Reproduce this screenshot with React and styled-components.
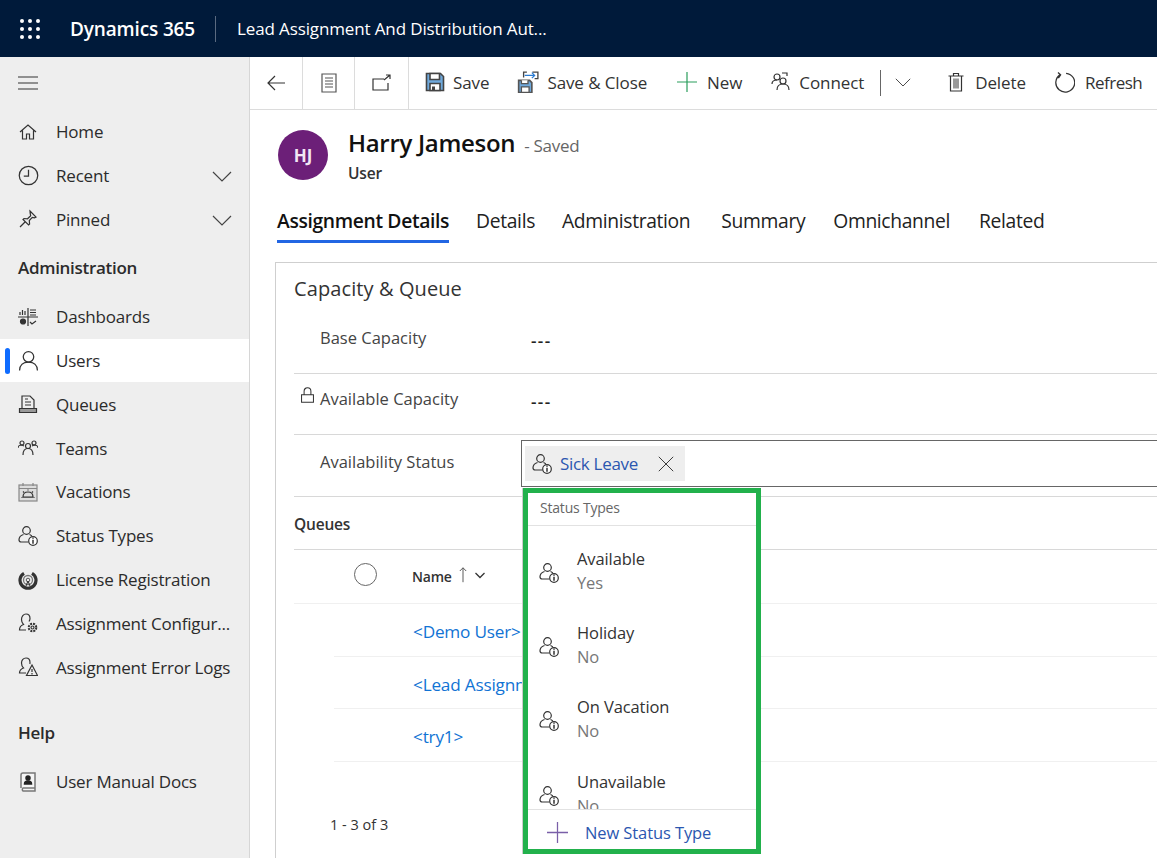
import React from 'react';
import styled, { createGlobalStyle } from 'styled-components';

const Global = createGlobalStyle`
	html, body { margin: 0; padding: 0; background: #fff; }
	body { font-family: "Open Sans", "Noto Sans", sans-serif; overflow: hidden; }
	* { box-sizing: border-box; }
`;

const Page = styled.div`
	width: 1157px;
	height: 858px;
	overflow: hidden;
	display: flex;
	flex-direction: column;
	letter-spacing: -0.2px;
`;

const TopBar = styled.header`
	height: 57px;
	flex: none;
	background: #001a3a;
	color: #fff;
	display: flex;
	align-items: center;
	padding-left: 20px;
`;

const Brand = styled.span`
	font-size: 19px;
	font-weight: 600;
	margin-left: 30px;
	padding-right: 20px;
	letter-spacing: -0.15px;
`;

const AppName = styled.span`
	font-size: 17px;
	border-left: 1px solid #5a6a80;
	padding-left: 21px;
	line-height: 26px;
	letter-spacing: -0.13px;
`;

const Body = styled.div`
	flex: 1;
	display: flex;
	min-height: 0;
`;

const Sidebar = styled.nav`
	width: 250px;
	flex: none;
	background: #eeeeee;
	border-right: 1px solid #d6d6d6;
	padding-top: 6px;
`;

const Burger = styled.div`
	height: 40px;
	margin-bottom: 7px;
	padding-left: 18px;
	display: flex;
	align-items: center;
`;

const NavRow = styled.div`
	position: relative;
	height: 43.8px;
	display: flex;
	align-items: center;
	padding-left: 18px;
	font-size: 17px;
	color: #2b2b2b;
	background: ${(p) => (p.$active ? '#fff' : 'transparent')};
	&:before {
		content: '';
		display: ${(p) => (p.$active ? 'block' : 'none')};
		position: absolute;
		left: 5px;
		top: 9px;
		width: 5px;
		height: 26px;
		border-radius: 3px;
		background: #0f6cff;
	}
`;

const NavIcon = styled.span`
	width: 38px;
	flex: none;
	display: flex;
`;

const NavChevron = styled.span`
	position: absolute;
	right: 17px;
	top: 12px;
	display: flex;
`;

const NavHeading = styled.div`
	font-size: 17px;
	font-weight: 600;
	color: #2b2b2b;
	padding-left: 18px;
	height: ${(p) => p.$height}px;
	padding-top: ${(p) => p.$top}px;
	line-height: 24px;
	letter-spacing: -0.3px;
`;

const Main = styled.main`
	flex: 1;
	min-width: 0;
	position: relative;
	display: flex;
	flex-direction: column;
`;

const Toolbar = styled.div`
	height: 53px;
	flex: none;
	border-bottom: 1px solid #dcdcdc;
	display: flex;
	align-items: stretch;
	white-space: nowrap;
`;

const NavButton = styled.div`
	width: ${(p) => p.$w}px;
	flex: none;
	display: flex;
	align-items: center;
	justify-content: center;
	border-right: 1px solid #dcdcdc;
`;

const ToolButton = styled.div`
	display: flex;
	align-items: center;
	gap: ${(p) => p.$gap || 8}px;
	margin-left: ${(p) => p.$ml || 0}px;
	padding-bottom: 2px;
	font-size: 17px;
	color: #333;
	letter-spacing: ${(p) => p.$ls || -0.1}px;
`;

const Rule = styled.span`
	width: 1px;
	height: 26px;
	background: #666;
	align-self: center;
	margin-left: 16px;
`;

const Head = styled.div`
	display: flex;
	align-items: flex-start;
	padding: 20px 0 0 28px;
	height: 89px;
	flex: none;
`;

const Avatar = styled.div`
	width: 50px;
	height: 50px;
	border-radius: 50%;
	background: #6c1f78;
	color: #f2e6f4;
	font-size: 17px;
	font-weight: 700;
	display: flex;
	align-items: center;
	justify-content: center;
	letter-spacing: 0;
`;

const Titles = styled.div`
	margin-left: 20px;
	margin-top: -4px;
`;

const Name = styled.div`
	font-size: 24px;
	font-weight: 600;
	color: #111;
	line-height: 34px;
	display: flex;
	align-items: baseline;
	gap: 9px;
	letter-spacing: -0.3px;
`;

const Saved = styled.span`
	font-size: 17px;
	font-weight: 400;
	color: #666;
	letter-spacing: -0.3px;
`;

const Entity = styled.div`
	font-size: 15.5px;
	font-weight: 600;
	color: #333;
	line-height: 22px;
	margin-top: -1px;
`;

const Tabs = styled.div`
	display: flex;
	padding-left: 27px;
	height: 43px;
	flex: none;
`;

const Tab = styled.div`
	font-size: 19.3px;
	line-height: 44px;
	height: 44px;
	font-weight: ${(p) => (p.$active ? 600 : 400)};
	color: ${(p) => (p.$active ? '#111' : '#222')};
	margin-right: ${(p) => p.$mr}px;
	border-bottom: ${(p) => (p.$active ? '3px solid #2266e3' : 'none')};
	letter-spacing: -0.35px;
	white-space: nowrap;
`;

const Section = styled.section`
	margin: 20px 0 0 25px;
	flex: 1;
	border: solid #cfcfcf;
	border-width: 1px 0 0 1px;
	padding: 0 0 0 18px;
	min-height: 0;
`;

const SectionTitle = styled.h2`
	margin: 0;
	font-size: 20px;
	font-weight: 400;
	color: #333;
	line-height: 26px;
	padding-top: 13px;
	height: 50px;
	letter-spacing: 0.1px;
`;

const Field = styled.div`
	height: ${(p) => p.$h}px;
	display: flex;
	border-bottom: 1px solid #d8d8d8;
	position: relative;
`;

const FieldLabel = styled.div`
	width: 227px;
	flex: none;
	padding: 0 0 0 26px;
	font-size: 16.5px;
	color: #444;
	line-height: 24px;
	padding-top: ${(p) => p.$top}px;
	letter-spacing: 0;
`;

const LockIcon = styled.span`
	position: absolute;
	left: 5px;
	top: 13px;
	display: flex;
`;

const FieldValue = styled.div`
	font-size: 17px;
	font-weight: 600;
	color: #222;
	padding: ${(p) => p.$top}px 0 0 10px;
	line-height: 24px;
	letter-spacing: 1.4px;
`;

const Lookup = styled.div`
	flex: 1;
	height: 47px;
	margin-top: 5px;
	border: 1px solid #666;
	border-right: 0;
	padding: 5px 3px;
`;

const Chip = styled.div`
	width: 160px;
	height: 35px;
	background: #eeeeee;
	display: flex;
	align-items: center;
	padding-left: 7px;
	color: #2b57b0;
	font-size: 17px;
	gap: 8px;
	letter-spacing: -0.3px;
`;

const ChipClose = styled.span`
	margin-left: 12px;
	display: flex;
`;

const SubHeading = styled.div`
	height: 53px;
	border-bottom: 1px solid #d8d8d8;
	font-size: 15.5px;
	font-weight: 600;
	color: #333;
	line-height: 54px;
`;

const GridHead = styled.div`
	height: 54px;
	border-bottom: 1px solid #f0f0f0;
	display: flex;
	align-items: center;
	padding-left: 60px;
	font-size: 14px;
	font-weight: 600;
	color: #333;
`;

const Radio = styled.span`
	width: 23px;
	height: 23px;
	border: 1.5px solid #666;
	border-radius: 50%;
	margin-right: 35px;
	margin-top: -4px;
`;

const SortIcons = styled.span`
	display: flex;
	align-items: center;
	gap: 4px;
	margin-left: 3px;
	margin-top: -4px;
`;

const GridRow = styled.div`
	height: ${(p) => p.$h}px;
	margin-left: 40px;
	padding-left: 79px;
	border-bottom: 1px solid #f0f0f0;
	font-size: 17.2px;
	line-height: 55px;
	color: #1173d4;
	white-space: nowrap;
`;

const Count = styled.div`
	margin: 53px 0 0 36px;
	font-size: 14.5px;
	color: #333;
	letter-spacing: 0;
`;

const Flyout = styled.div`
	position: absolute;
	left: 273px;
	top: 431px;
	width: 238px;
	height: 366px;
	background: #fff;
	border: 5px solid #22b14c;
	display: flex;
	flex-direction: column;
	box-shadow: -1px 0 0 #ccc;
`;

const FlyoutHead = styled.div`
	height: 33px;
	flex: none;
	border-bottom: 1px solid #e2e2e2;
	padding-left: 12px;
	font-size: 14px;
	color: #666;
	line-height: 30px;
`;

const FlyoutList = styled.div`
	flex: 1;
	overflow: hidden;
	padding-top: 20px;
	min-height: 0;
`;

const Option = styled.div`
	height: 74.2px;
	display: flex;
	padding-left: 11px;
`;

const OptionIcon = styled.span`
	width: 38px;
	flex: none;
	display: flex;
	padding-top: 17px;
`;

const OptionText = styled.div`
	font-size: 16.5px;
	line-height: 24px;
	color: #333;
	padding-top: 1px;
	letter-spacing: -0.1px;
`;

const OptionSub = styled.div`
	color: #777;
`;

const FlyoutFoot = styled.div`
	height: 40px;
	flex: none;
	border-top: 1px solid #e2e2e2;
	display: flex;
	align-items: center;
	padding: 5px 0 0 19px;
	gap: 17px;
	font-size: 16.5px;
	color: #2b57b0;
	letter-spacing: -0.1px;
`;

const Svg = styled.svg`
	display: block;
	flex: none;
	fill: none;
	stroke: ${(p) => p.$color || '#333'};
	stroke-width: ${(p) => p.$sw || 1.2};
`;

const Ico = ({ s = 20, color, sw, children }) => (
	<Svg width={s} height={s} viewBox="0 0 20 20" $color={color} $sw={sw}>
		{children}
	</Svg>
);

const Chevron = ({ s = 20, color = '#444' }) => (
	<Ico s={s} color={color}>
		<path d="M1 6l9 9 9-9" />
	</Ico>
);

const home = (
	<Ico>
		<path d="M2 10l8-7 8 7M4.500 8.500V17h4v-5h3v5h4V8.500" />
	</Ico>
);
const clock = (
	<Ico s={21}>
		<circle cx="10" cy="10" r="8.800" />
		<path d="M10 4.500V10.500H5.500" />
	</Ico>
);
const pin = (
	<Ico>
		<path d="M12 2l6 6-1.500.8-2.200-.5-3 3.200.3 3.500-1 1L5 10.500l1-1 3.500.3 3.200-3-.5-2.300zM7 13l-5 5" />
	</Ico>
);
const dash = (
	<Ico>
		<path d="M0 10h20M10 1v18M2 8V5M4.500 8V3M7 8V4M12 3h6M12 5.500h6M12 8h6M12 15l2 2 4-3" />
		<circle cx="5" cy="14.500" r="2.500" fill="#333" />
	</Ico>
);
const user = (
	<Ico s={21}>
		<circle cx="10" cy="6.500" r="5" />
		<path d="M1.500 19.500c0-5 3.500-8 8.500-8s8.500 3 8.500 8" />
	</Ico>
);
const queue = (
	<Ico>
		<path d="M4 14V2h8l4 4v8M7 5h3M7 8h6M7 11h6" />
		<path d="M1.500 14.500H18.500V18.500H1.500z" fill="#999" />
	</Ico>
);
const teams = (
	<Ico>
		<circle cx="4" cy="5" r="2" />
		<circle cx="16" cy="5" r="2" />
		<circle cx="10" cy="8" r="2.500" />
		<path d="M0 10c0-2 2-3 4-3l2 1M20 10c0-2-2-3-4-3l-2 1M5 17c0-4 2-6.500 5-6.500s5 2.500 5 6.500" />
	</Ico>
);
const vacation = (
	<Ico color="#888">
		<rect x="1" y="3" width="18" height="16" fill="#ddd" />
		<path d="M1 6.500h18M5 1v3M15 1v3M3 15.500h14" />
		<path d="M5 15c0-3 2-5 5-5s5 2 5 5zM10 7.500v1M5 9.500l1 1M15 9.500l-1 1" stroke="#333" />
	</Ico>
);
const statusIcon = (
	<Ico>
		<circle cx="8.500" cy="4.500" r="3.800" />
		<path d="M5.500 8.500C2.500 9.500 1 11.500 1 13.800A2.200 2.200 0 0 0 3.200 16H10.500M11.500 8.500c1 .4 1.700.9 2.300 1.500" />
		<circle cx="15" cy="15" r="4.300" fill="#fff" />
		<path d="M15 13.800v4M15 11.500v1.200" strokeWidth="1.500" />
	</Ico>
);
const license = (
	<Ico sw="3.200">
		<path d="M6 3.300a8 8 0 1 0 8 0" />
		<circle cx="10" cy="10" r="4.500" stroke="#777" strokeWidth="1.300" />
		<circle cx="10" cy="10" r="1.800" stroke="#555" strokeWidth="1" />
		<path d="M8 16l2-5 2 5" stroke="#333" strokeWidth="1" />
	</Ico>
);
const config = (
	<Ico>
		<path d="M8 17H1.500c0-3 1-4.500 4-5.500-1.500-1.500-2-3-2-5C3.500 3.500 5.500 1 8 1s4 2 4 4.500c0 1-.3 2-1 3" />
		<circle cx="14.500" cy="14.500" r="3.800" strokeWidth="2" strokeDasharray="2 1" />
		<circle cx="14.500" cy="14.500" r="1.500" />
	</Ico>
);
const errorLog = (
	<Ico>
		<path d="M8 16H1.500c0-3 1-4 4-5-1.500-1.500-2-3-2-5C3.500 3 5.500 1 8 1s4 2 4 4.500c0 .5 0 1-.2 1.500" />
		<path d="M14 8l5.500 10.500h-11zM14 12v3M14 16v1.500" />
	</Ico>
);
const manual = (
	<Ico color="#777" sw="1.500">
		<path d="M3 16V3a2 2 0 0 1 2-2h12v15H5a2 2 0 0 0 0 3h12v-3" fill="#f4f4f4" />
		<circle cx="10" cy="6" r="2" fill="#222" stroke="#222" />
		<path d="M6.500 12c0-2 1.500-3 3.500-3s3.500 1 3.500 3z" fill="#222" stroke="#222" />
	</Ico>
);

const upper = [
	['Home', home],
	['Recent', clock, true],
	['Pinned', pin, true]
];

const admin = [
	['Dashboards', dash],
	['Users', user, false, true],
	['Queues', queue],
	['Teams', teams],
	['Vacations', vacation],
	['Status Types', statusIcon],
	['License Registration', license],
	['Assignment Configur...', config],
	['Assignment Error Logs', errorLog]
];

const statuses = [
	['Available', 'Yes'],
	['Holiday', 'No'],
	['On Vacation', 'No'],
	['Unavailable', 'No']
];

const NavItem = ({ item }) => (
	<NavRow $active={item[3]}>
		<NavIcon>{item[1]}</NavIcon>
		{item[0]}
		{item[2] && (
			<NavChevron>
				<Chevron />
			</NavChevron>
		)}
	</NavRow>
);

export default function App() {
	return (
		<Page>
			<Global />
			<TopBar>
				<Ico s={20} color="#fff" sw="0">
					{[2, 10, 18].map((y) =>
						[2, 10, 18].map((x) => <circle key={x + '-' + y} cx={x} cy={y} r="2" fill="#fff" />)
					)}
				</Ico>
				<Brand>Dynamics 365</Brand>
				<AppName>Lead Assignment And Distribution Aut...</AppName>
			</TopBar>
			<Body>
				<Sidebar>
					<Burger>
						<Ico>
							<path d="M0 4h20M0 10h20M0 16h20" />
						</Ico>
					</Burger>
					{upper.map((i) => (
						<NavItem key={i[0]} item={i} />
					))}
					<NavHeading $height={53.5} $top={15}>Administration</NavHeading>
					{admin.map((i) => (
						<NavItem key={i[0]} item={i} />
					))}
					<NavHeading $height={71} $top={32}>Help</NavHeading>
					<NavItem item={['User Manual Docs', manual]} />
				</Sidebar>
				<Main>
					<Toolbar>
						<NavButton $w={53}>
							<Ico>
								<path d="M19 10H2M9 3l-7 7 7 7" />
							</Ico>
						</NavButton>
						<NavButton $w={52}>
							<Ico color="#555">
								<path d="M3 1h14v18H3zM6 5h8M6 8h8M6 11h8M6 14h8" />
							</Ico>
						</NavButton>
						<NavButton $w={54}>
							<Ico>
								<path d="M12 6H1v11h15v-7M12 7l6-5M14 2h4v4" />
							</Ico>
						</NavButton>
						<ToolButton $ml={16}>
							<Ico sw="1.600">
								<path d="M1.500 1.500h14l3 3v14h-17z" fill="#6fa9dc" stroke="#444" />
								<path d="M5 1.500v6h9.500v-6z" fill="#fff" stroke="#444" />
								<path d="M5 18.500v-7h10v7z" fill="#fff" stroke="#444" />
								<path d="M7 14.500h3v4H7z" fill="#444" stroke="none" />
							</Ico>
							Save
						</ToolButton>
						<ToolButton $ml={28}>
							<Ico s={22}>
								<path d="M1.500 8.500h10l2 2v9h-12z" fill="#6fa9dc" stroke="#555" strokeWidth="1.500" />
								<path d="M4 8.500v3h6v-3M4 19.500v-5h7v5z" fill="#fff" stroke="#555" />
								<path d="M6 6V1h3M14 1h5v6h-3" stroke="#444" />
								<path d="M7 4h9M13.500 1.500L16 4l-2.500 2.500" stroke="#2b7cd3" />
							</Ico>
							Save &amp; Close
						</ToolButton>
						<ToolButton $ml={30} $gap={10}>
							<Ico color="#2a9d5c">
								<path d="M10 0v20M0 10h20" />
							</Ico>
							New
						</ToolButton>
						<ToolButton $ml={29}>
							<Ico>
								<circle cx="6" cy="5" r="3" />
								<path d="M1 12c0-3 2-4 5-4M11 1h5v3" />
								<circle cx="12" cy="9" r="3" />
								<path d="M6 18c0-4 2-6 6-6s6 2 6 6" />
							</Ico>
							Connect
						</ToolButton>
						<Rule />
						<ToolButton $ml={14}>
							<Chevron s={16} />
						</ToolButton>
						<ToolButton $ml={35} $gap={9}>
							<Ico>
								<path d="M2.500 4h15M7.500 4V1.500h5V4M4.500 4v15h11V4" />
								<path d="M8 6.500v10M10 6.500v10M12 6.500v10" stroke="#555" />
							</Ico>
							Delete
						</ToolButton>
						<ToolButton $ml={28} $gap={10} $ls={-0.5}>
							<Ico s={21}>
								<path d="M11.500 1.200A9 9 0 1 1 6 2.500M3.800 .5L6.300 2.800 4.200 5.800" />
							</Ico>
							Refresh
						</ToolButton>
					</Toolbar>
					<Head>
						<Avatar>HJ</Avatar>
						<Titles>
							<Name>
								Harry Jameson <Saved>- Saved</Saved>
							</Name>
							<Entity>User</Entity>
						</Titles>
					</Head>
					<Tabs>
						<Tab $active $mr={27}>Assignment Details</Tab>
						<Tab $mr={27}>Details</Tab>
						<Tab $mr={31}>Administration</Tab>
						<Tab $mr={28}>Summary</Tab>
						<Tab $mr={29}>Omnichannel</Tab>
						<Tab $mr={0}>Related</Tab>
					</Tabs>
					<Section>
						<SectionTitle>Capacity &amp; Queue</SectionTitle>
						<Field $h={61}>
							<FieldLabel $top={13}>Base Capacity</FieldLabel>
							<FieldValue $top={16}>---</FieldValue>
						</Field>
						<Field $h={61}>
							<LockIcon>
								<Ico s={17}>
									<path d="M3 9h14v9H3zM6 9V5a4 4 0 0 1 8 0v4" />
								</Ico>
							</LockIcon>
							<FieldLabel $top={13}>Available Capacity</FieldLabel>
							<FieldValue $top={16}>---</FieldValue>
						</Field>
						<Field $h={62}>
							<FieldLabel $top={15}>Availability Status</FieldLabel>
							<Lookup>
								<Chip>
									{statusIcon}
									Sick Leave
									<ChipClose>
										<Ico s={16}>
											<path d="M1 1l18 18M19 1L1 19" />
										</Ico>
									</ChipClose>
								</Chip>
							</Lookup>
						</Field>
						<SubHeading>Queues</SubHeading>
						<GridHead>
							<Radio />
							Name
							<SortIcons>
								<Ico s={16} color="#555">
									<path d="M10 19V1M6 5l4-4 4 4" />
								</Ico>
								<Ico s={10} sw="2.500">
									<path d="M1 6l9 9 9-9" />
								</Ico>
							</SortIcons>
						</GridHead>
						<GridRow $h={53}>&lt;Demo User&gt;</GridRow>
						<GridRow $h={52}>&lt;Lead Assignment</GridRow>
						<GridRow $h={53}>&lt;try1&gt;</GridRow>
						<Count>1 - 3 of 3</Count>
					</Section>
					<Flyout>
						<FlyoutHead>Status Types</FlyoutHead>
						<FlyoutList>
							{statuses.map((s) => (
								<Option key={s[0]}>
									<OptionIcon>{statusIcon}</OptionIcon>
									<OptionText>
										{s[0]}
										<OptionSub>{s[1]}</OptionSub>
									</OptionText>
								</Option>
							))}
						</FlyoutList>
						<FlyoutFoot>
							<Ico s={21} color="#7a5fa8">
								<path d="M10 0v20M0 10h20" />
							</Ico>
							New Status Type
						</FlyoutFoot>
					</Flyout>
				</Main>
			</Body>
		</Page>
	);
}
